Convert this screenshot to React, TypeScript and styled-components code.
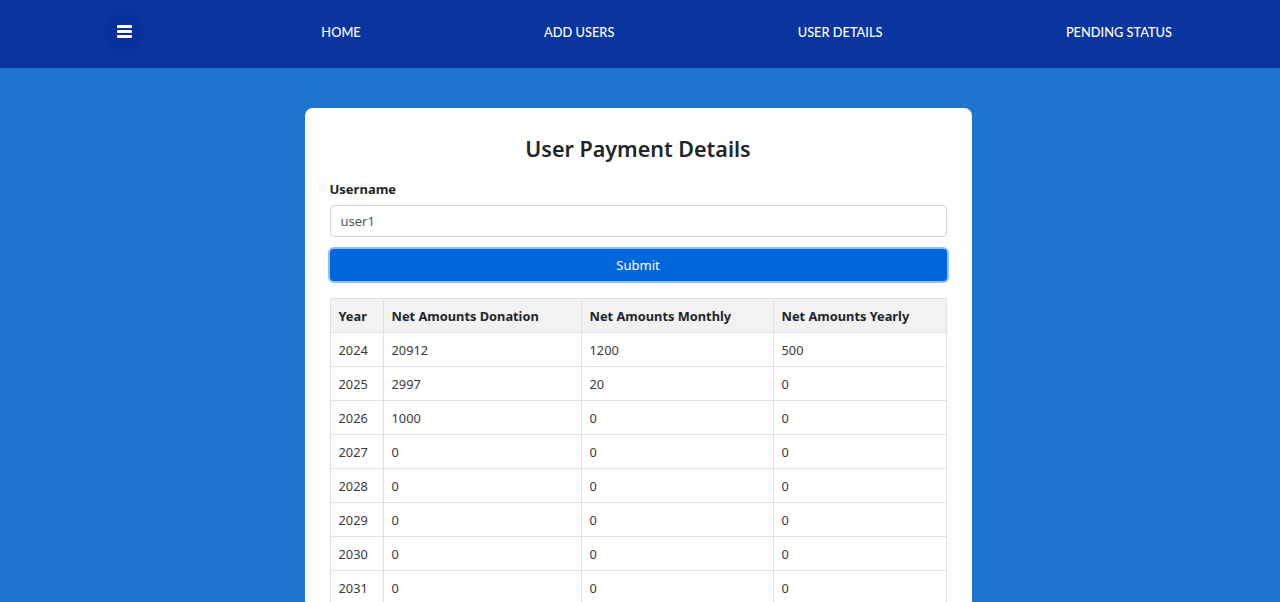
import React, { useState } from "react";
import styled, { createGlobalStyle } from "styled-components";

const GlobalStyle = createGlobalStyle`
  html, body {
    margin: 0;
    padding: 0;
  }
  body {
    background: #1e74cf;
    font-family: "Noto Sans", "Open Sans", sans-serif;
    color: #212529;
  }
  * {
    box-sizing: border-box;
  }
`;

const NavBar = styled.nav`
  height: 68px;
  background: #0a34a0;
  display: flex;
  align-items: center;
  justify-content: space-between;
  padding: 0 108px 5px 110px;
`;

const MenuButton = styled.button`
  width: 28px;
  height: 28px;
  border: none;
  border-radius: 4px;
  background: #09309a;
  box-shadow: 0 0 4px rgba(0, 0, 0, 0.25);
  display: flex;
  align-items: center;
  justify-content: center;
  padding: 0;
  cursor: pointer;
`;

const NavLink = styled.a`
  color: #ffffff;
  font-family: "Lato", "Open Sans", sans-serif;
  font-size: 12.8px;
  font-weight: 500;
  text-transform: uppercase;
  text-decoration: none;
`;

const Main = styled.main`
  display: flex;
  justify-content: center;
  padding: 40px 4px 40px 0;
`;

const Card = styled.div`
  width: 667px;
  background: #ffffff;
  border-radius: 8px;
  padding: 26px 25px 30px;
`;

const Title = styled.h2`
  margin: 0 0 18px;
  text-align: center;
  font-size: 21.5px;
  font-weight: 600;
  line-height: 29px;
  color: #212529;
`;

const Label = styled.label`
  display: block;
  font-size: 13px;
  font-weight: 700;
  line-height: 17px;
  margin-bottom: 7px;
`;

const Input = styled.input`
  display: block;
  width: 100%;
  height: 32px;
  border: 1px solid #ced4da;
  border-radius: 4px;
  padding: 0 10px;
  font-family: inherit;
  font-size: 13px;
  color: #555;
  outline: none;
`;

const SubmitButton = styled.button`
  display: block;
  width: 100%;
  height: 32px;
  margin-top: 12px;
  border: none;
  border-radius: 4px;
  background: #0066d9;
  color: #ffffff;
  font-family: inherit;
  font-size: 13px;
  box-shadow: 0 0 0 2px rgba(110, 170, 245, 0.75);
  cursor: pointer;
`;

const Table = styled.table`
  width: 100%;
  margin-top: 17px;
  border-collapse: collapse;
  font-size: 12.8px;
`;

const HeadCell = styled.th<{ $width?: number }>`
  width: ${(p) => (p.$width ? `${p.$width}px` : "auto")};
  background: #f2f2f2;
  border: 1px solid #dee2e6;
  text-align: left;
  font-weight: 700;
  padding: 0 8px;
  height: 34px;
`;

const Cell = styled.td`
  border: 1px solid #dee2e6;
  padding: 0 8px;
  height: 34px;
  color: #3a3a3a;
`;

const rows = [
  { year: 2024, donation: 20912, monthly: 1200, yearly: 500 },
  { year: 2025, donation: 2997, monthly: 20, yearly: 0 },
  { year: 2026, donation: 1000, monthly: 0, yearly: 0 },
  { year: 2027, donation: 0, monthly: 0, yearly: 0 },
  { year: 2028, donation: 0, monthly: 0, yearly: 0 },
  { year: 2029, donation: 0, monthly: 0, yearly: 0 },
  { year: 2030, donation: 0, monthly: 0, yearly: 0 },
  { year: 2031, donation: 0, monthly: 0, yearly: 0 },
  { year: 2032, donation: 0, monthly: 0, yearly: 0 },
  { year: 2033, donation: 0, monthly: 0, yearly: 0 },
];

const App = () => {
  const [username, setUsername] = useState("user1");

  return (
    <>
      <GlobalStyle />
      <NavBar>
        <MenuButton aria-label="menu">
          <svg width="15" height="13" viewBox="0 0 15 13">
            <rect x="0" y="0" width="15" height="3" rx="1" fill="#ffffff" />
            <rect x="0" y="5" width="15" height="3" rx="1" fill="#ffffff" />
            <rect x="0" y="10" width="15" height="3" rx="1" fill="#ffffff" />
          </svg>
        </MenuButton>
        <NavLink href="#">Home</NavLink>
        <NavLink href="#">Add Users</NavLink>
        <NavLink href="#">User Details</NavLink>
        <NavLink href="#">Pending Status</NavLink>
      </NavBar>
      <Main>
        <Card>
          <Title>User Payment Details</Title>
          <Label htmlFor="username">Username</Label>
          <Input
            id="username"
            value={username}
            onChange={(e) => setUsername(e.target.value)}
          />
          <SubmitButton type="button">Submit</SubmitButton>
          <Table>
            <thead>
              <tr>
                <HeadCell $width={53}>Year</HeadCell>
                <HeadCell $width={198}>Net Amounts Donation</HeadCell>
                <HeadCell $width={192}>Net Amounts Monthly</HeadCell>
                <HeadCell>Net Amounts Yearly</HeadCell>
              </tr>
            </thead>
            <tbody>
              {rows.map((r) => (
                <tr key={r.year}>
                  <Cell>{r.year}</Cell>
                  <Cell>{r.donation}</Cell>
                  <Cell>{r.monthly}</Cell>
                  <Cell>{r.yearly}</Cell>
                </tr>
              ))}
            </tbody>
          </Table>
        </Card>
      </Main>
    </>
  );
};

export default App;
